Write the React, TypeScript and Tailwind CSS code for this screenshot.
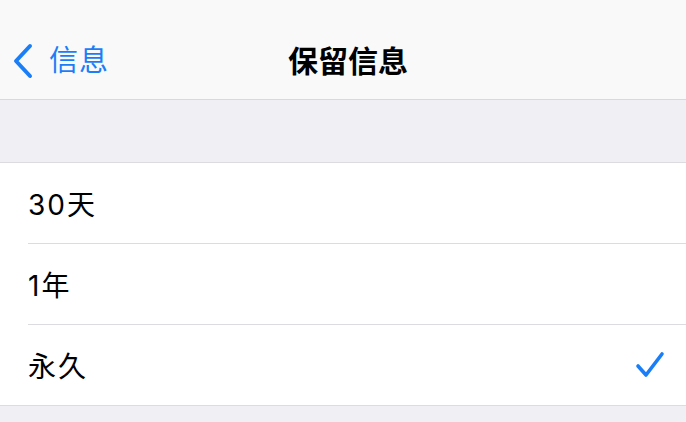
import React from "react";

const FONT = "font-['Inter','Noto_Sans_CJK_SC',sans-serif]";

const options = [
  { label: "30天", selected: false },
  { label: "1年", selected: false },
  { label: "永久", selected: true },
];

function BackChevron() {
  return (
    <svg width="20" height="36" viewBox="0 0 20 36" fill="none">
      <path
        d="M17 3 L3 18 L17 33"
        stroke="#1a7ef7"
        strokeWidth="4"
        strokeLinecap="round"
        strokeLinejoin="round"
      />
    </svg>
  );
}

function Check() {
  return (
    <svg width="30" height="28" viewBox="0 0 30 28" fill="none">
      <path
        d="M3 15 L11 24 L27 3"
        stroke="#1a7ef7"
        strokeWidth="3.6"
        strokeLinecap="round"
        strokeLinejoin="round"
      />
    </svg>
  );
}

export default function App() {
  return (
    <div className={`w-[686px] h-[422px] bg-[#efeff4] overflow-hidden ${FONT}`}>
      <div className="h-[100px] bg-[#f9f9fa] border-b border-[#d9d9dd] grid grid-cols-[1fr_auto_1fr] items-center pt-[22px]">
        <button type="button" className="flex items-center gap-[16px] pl-[13px] text-[#1a7ef7] text-[29px] leading-none">
          <BackChevron />
          <span className="tracking-[1px]">信息</span>
        </button>
        <h1 className="text-[30px] font-semibold text-black leading-none pl-[10px]">保留信息</h1>
        <div />
      </div>

      <div className="h-[62px]" />

      <div className="bg-white border-y border-[#dcdce0]">
        {options.map((o, i) => (
          <div key={o.label} className="pl-[28px]">
            <div
              className={`flex items-center justify-between pr-[21px] ${
                i < options.length - 1 ? "h-[81px] border-b border-[#dcdce0]" : "h-[80px]"
              }`}
            >
              <span className="text-[28px] text-black leading-none pt-[3px] tracking-[2px]">{o.label}</span>
              {o.selected && <Check />}
            </div>
          </div>
        ))}
      </div>
    </div>
  );
}
